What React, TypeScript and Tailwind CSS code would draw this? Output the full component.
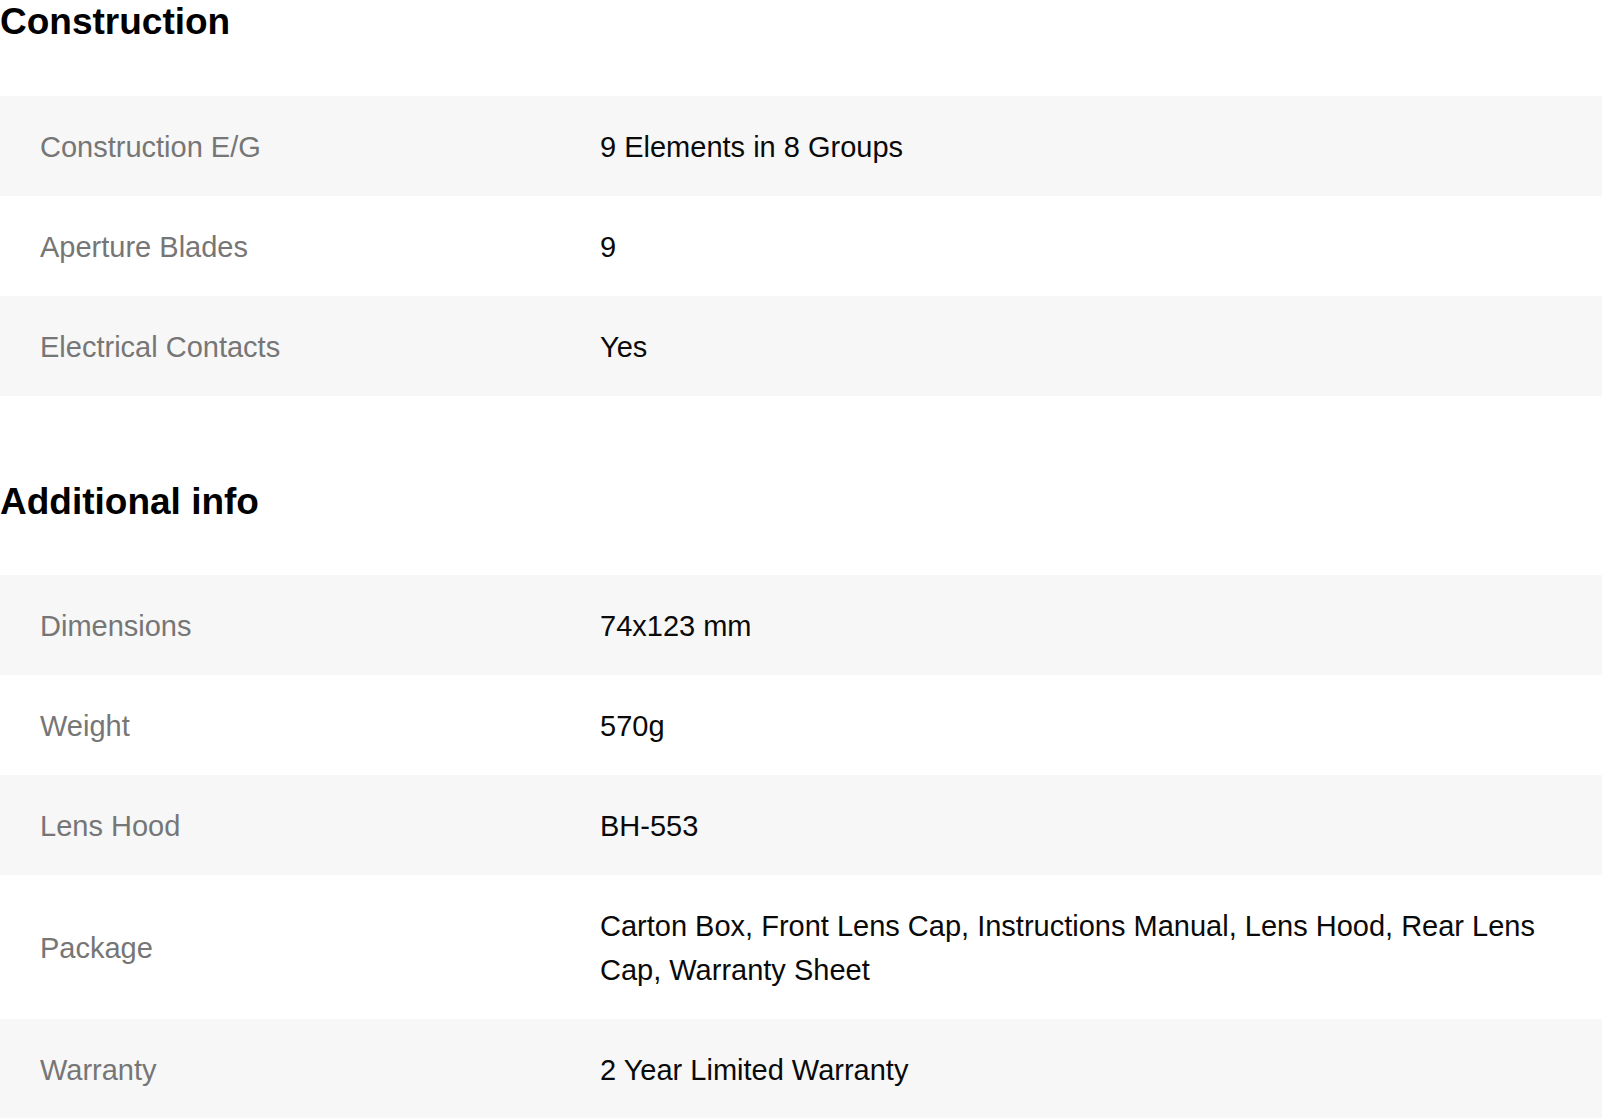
import React from "react";

type Spec = { label: string; value: string };

const construction: Spec[] = [
  { label: "Construction E/G", value: "9 Elements in 8 Groups" },
  { label: "Aperture Blades", value: "9" },
  { label: "Electrical Contacts", value: "Yes" },
];

const additional: Spec[] = [
  { label: "Dimensions", value: "74x123 mm" },
  { label: "Weight", value: "570g" },
  { label: "Lens Hood", value: "BH-553" },
  {
    label: "Package",
    value:
      "Carton Box, Front Lens Cap, Instructions Manual, Lens Hood, Rear Lens Cap, Warranty Sheet",
  },
  { label: "Warranty", value: "2 Year Limited Warranty" },
];

const SpecTable = ({ rows }: { rows: Spec[] }) => (
  <div className="flex flex-col">
    {rows.map((row, i) => (
      <div
        key={row.label}
        className={`grid grid-cols-[600px_1fr] items-center pt-[28.5px] pb-[27.5px] ${
          i % 2 === 0 ? "bg-[#f7f7f7]" : "bg-white"
        }`}
      >
        <div className="pl-[40px] pr-6 text-[29px] leading-[44px] text-[#767676]">
          {row.label}
        </div>
        <div className="pr-[40px] text-[29px] leading-[44px] text-[#0a0a0a]">
          {row.value}
        </div>
      </div>
    ))}
  </div>
);

function App() {
  return (
    <div className="min-h-screen w-full overflow-hidden bg-white font-['Liberation_Sans',Arial,sans-serif]">
      <h2 className="text-[37px] leading-[43px] font-bold text-black">
        Construction
      </h2>
      <div className="mt-[53px]">
        <SpecTable rows={construction} />
      </div>
      <h2 className="mt-[84px] text-[37px] leading-[43px] font-bold text-black">
        Additional info
      </h2>
      <div className="mt-[52px]">
        <SpecTable rows={additional} />
      </div>
    </div>
  );
}

export default App;
